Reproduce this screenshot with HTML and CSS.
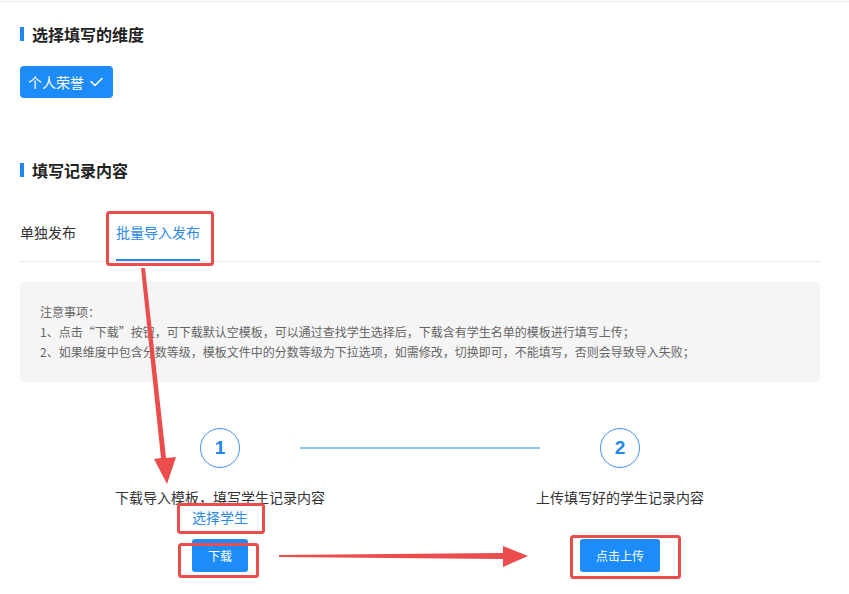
FILE: index.html
```html
<!DOCTYPE html>
<html lang="zh-CN">
<head>
<meta charset="utf-8">
<title>批量导入发布</title>
<link rel="stylesheet" href="styles.css">
</head>
<body>
<div class="page">
  <div class="section-title">选择填写的维度</div>
  <div class="dims">
    <button class="dim-btn">个人荣誉
      <svg class="check" width="13" height="10" viewBox="0 0 13 10"><polyline points="1,4.5 5,8.5 12,1.5" fill="none" stroke="#fff" stroke-width="1.6" stroke-linecap="round" stroke-linejoin="round"/></svg>
    </button>
  </div>

  <div class="section-title second">填写记录内容</div>
  <div class="tabs">
    <div class="tab">单独发布</div>
    <div class="tab active">批量导入发布</div>
  </div>

  <div class="notice">
    <p>注意事项：</p>
    <p>1、点击“下载”按钮，可下载默认空模板，可以通过查找学生选择后，下载含有学生名单的模板进行填写上传；</p>
    <p>2、如果维度中包含分数等级，模板文件中的分数等级为下拉选项，如需修改，切换即可，不能填写，否则会导致导入失败；</p>
  </div>

  <div class="steps-head">
    <div class="circle">1</div>
    <div class="step-line"></div>
    <div class="circle">2</div>
  </div>
  <div class="steps-body">
    <div class="step-label">下载导入模板，填写学生记录内容</div>
    <div class="step-label">上传填写好的学生记录内容</div>
    <a class="step-link">选择学生</a>
    <div></div>
    <div class="btn-cell"><button class="blue-btn small">下载</button></div>
    <div class="btn-cell"><button class="blue-btn wide">点击上传</button></div>
  </div>
</div>

<svg class="annot" width="849" height="594" viewBox="0 0 849 594">
  <g fill="none" stroke="#eb4d4d" stroke-width="3">
    <rect x="107.5" y="212.5" width="105" height="52" rx="2"/>
    <rect x="178.5" y="504.5" width="85" height="28" rx="2"/>
    <rect x="179.5" y="544.5" width="78" height="32" rx="2"/>
    <rect x="571.5" y="536.5" width="108" height="41" rx="2"/>
  </g>
  <g fill="#eb4d4d">
    <polygon points="141,268 145,268 166,458 176,457 167,484 154,459 161,458"/>
    <polygon points="279,555 503,553 503,546 528,556 503,567 503,559 279,557"/>
  </g>
</svg>
</body>
</html>
```

FILE: styles.css
```css
* { box-sizing: border-box; }
html, body { margin: 0; padding: 0; background: #fff; }
body {
  font-family: "Noto Sans CJK SC", "Liberation Sans", sans-serif;
  color: #333;
  width: 849px;
  height: 594px;
  overflow: hidden;
  position: relative;
}
.page {
  margin-top: 1px;
  border-top: 1px solid #ececec;
  padding: 0 29px 0 20px;
}
.section-title {
  margin-top: 21px;
  height: 22px;
  line-height: 22px;
  font-size: 16px;
  font-weight: 700;
  color: #222;
  padding-left: 12px;
  position: relative;
  display: flex;
  align-items: center;
}
.section-title::before {
  content: "";
  position: absolute;
  left: 0;
  top: 4px;
  width: 4px;
  height: 14px;
  background: #1e88f0;
}
.section-title.second { margin-top: 61px; }
.dims { margin-top: 21px; }
.dim-btn {
  display: inline-flex;
  align-items: center;
  gap: 6px;
  height: 32px;
  padding: 0 10px 0 8px;
  background: #1d8cf8;
  color: #fff;
  border: none;
  border-radius: 4px;
  font-family: inherit;
  font-size: 14px;
  line-height: 20px;
}
.tabs {
  margin-top: 23px;
  display: flex;
  gap: 40px;
  border-bottom: 1px solid #ebebeb;
}
.tab {
  font-size: 14px;
  line-height: 20px;
  padding: 18px 0 17px;
  border-bottom: 2px solid transparent;
  color: #333;
}
.tab.active {
  color: #2b8ae8;
  border-bottom-color: #2b8ae8;
}
.notice {
  margin-top: 20px;
  background: #f5f5f5;
  border-radius: 4px;
  padding: 20px 20px;
  font-size: 12px;
  line-height: 20px;
  color: #666;
}
.notice p { margin: 0; }
.steps-head {
  margin-top: 46px;
  display: flex;
  align-items: center;
  padding-left: 180px;
}
.circle {
  width: 40px;
  height: 40px;
  border: 1px solid #3d92e6;
  border-radius: 50%;
  display: flex;
  align-items: center;
  justify-content: center;
  color: #1f86e8;
  font-family: "Liberation Sans", sans-serif;
  font-weight: 700;
  font-size: 19px;
}
.step-line {
  width: 240px;
  height: 2px;
  background: #8fc4ee;
  margin: 0 60px;
}
.steps-body {
  margin-top: 19px;
  display: grid;
  grid-template-columns: 400px 400px;
  justify-items: center;
}
.step-label {
  font-size: 14px;
  line-height: 20px;
  color: #333;
}
.step-link {
  font-size: 14px;
  line-height: 20px;
  color: #2b8ae8;
  cursor: pointer;
}
.btn-cell { margin-top: 12px; }
.blue-btn {
  height: 33px;
  background: #1d8cf8;
  color: #fff;
  border: none;
  border-radius: 3px;
  font-family: inherit;
  font-size: 12px;
  padding: 0;
}
.blue-btn.small { width: 56px; }
.blue-btn.wide { width: 80px; }
.annot {
  position: absolute;
  left: 0;
  top: 0;
  pointer-events: none;
}
```
